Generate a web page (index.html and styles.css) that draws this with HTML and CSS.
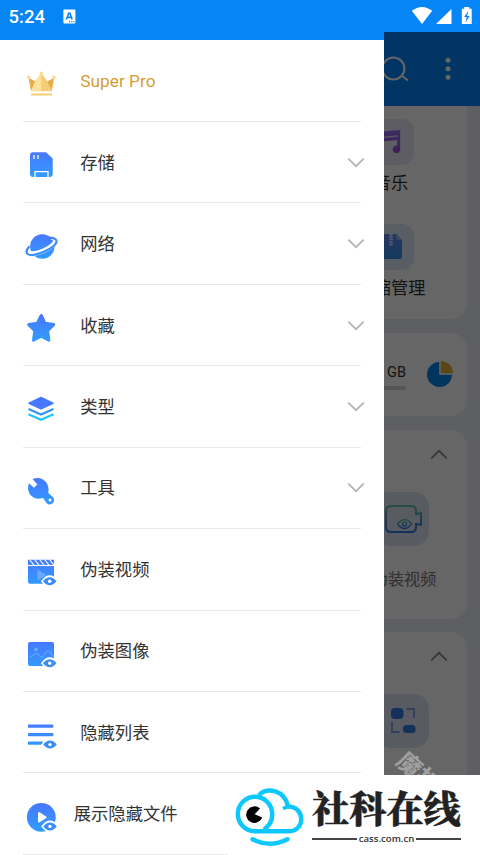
FILE: index.html
```html
<!DOCTYPE html>
<html lang="zh-CN">
<head>
<meta charset="utf-8">
<title>Super Pro</title>
<link rel="stylesheet" href="styles.css">
</head>
<body>
<svg class="defs" width="0" height="0">
  <defs>
    <linearGradient id="blue" gradientUnits="userSpaceOnUse" x1="0" y1="5" x2="0" y2="31"><stop offset="0" stop-color="#4778ff"/><stop offset="1" stop-color="#319cff"/></linearGradient>
    <linearGradient id="violet" x1="0" y1="0" x2="0" y2="1"><stop offset="0" stop-color="#9370f0"/><stop offset="1" stop-color="#a845d8"/></linearGradient>
    <linearGradient id="zip" x1="0" y1="0" x2="0" y2="1"><stop offset="0" stop-color="#6484ec"/><stop offset="1" stop-color="#2f92e8"/></linearGradient>
    <linearGradient id="camera" x1="0" y1="0" x2="0" y2="1"><stop offset="0" stop-color="#5fc0a8"/><stop offset="1" stop-color="#3478dc"/></linearGradient>
    <g id="eye">
      <path d="M-7.5 0Q-4-5 0-5T7.5 0Q4 5 0 5T-7.5 0Z" fill="#fff" stroke="#fff" stroke-width="2"/>
      <path d="M-6.8 0Q-3.5-4 0-4T6.8 0Q3.5 4 0 4T-6.8 0Z" fill="#3b8cff"/>
      <circle r="1.7" fill="#fff"/>
    </g>
    <symbol id="down" viewBox="0 0 18 12"><path d="M1.3 1.7 9 9.2l7.7-7.5" fill="none" stroke="#b3b3b3" stroke-width="1.7"/></symbol>
  </defs>
</svg>
<div class="screen">
  <header class="status">
    <span class="time">5:24</span>
    <svg class="ime" width="13" height="15" viewBox="0 0 13 15"><rect x=".4" y=".5" width="12" height="14" rx="1" fill="#fff"/><path d="M3.4 10.5 5.8 4h1l2.4 6.5M4.3 8.4h4" fill="none" stroke="#0685f7" stroke-width="1.6"/><path d="M6 12.7h1.1m1.1 0h1.1m1.1 0h1.1" stroke="#0685f7" stroke-width="1.2"/></svg>
    <svg class="signals" width="62" height="20" viewBox="0 0 62 20"><path d="M.8 4.8Q11-3 21.2 4.8L11 18Z" fill="#fff"/><path d="M40.5 3v15H25Z" fill="#fff"/><path d="M53.3 1h5v1.8h2.4V18H50.8V2.8h2.5Z" fill="#fff"/><path d="m57.2 5-4 6h2.4l-1 5.2 4-6.3h-2.5Z" fill="#0685f7"/></svg>
  </header>
  <main class="app">
    <div class="toolbar">
      <svg width="28" height="28" viewBox="0 0 28 28" fill="none" stroke="#fff" stroke-width="2"><circle cx="12.4" cy="13.5" r="11"/><path d="m20.5 20.5 6.5 5"/></svg>
      <svg width="6" height="24" viewBox="0 0 6 24" fill="#fff"><circle cx="3" cy="3.2" r="2.5"/><circle cx="3" cy="11.8" r="2.5"/><circle cx="3" cy="20.2" r="2.5"/></svg>
    </div>
    <section class="card shortcuts">
      <div class="shortcut">
        <div class="tile lilac"><svg width="46" height="46" viewBox="0 0 46 46"><path d="M14 12.500 32.200 11v19a3.800 3.800 0 1 1-3-3.400V21L16 22.300v10a4 4 0 1 1-2-3Z" fill="url(#violet)"/><path d="m15 18.300 15-1.500" stroke="#e5e2f7" stroke-width="1.300"/></svg></div>
        <span>音乐</span>
      </div>
      <div class="shortcut">
        <div class="tile sky"><svg width="46" height="46" viewBox="0 0 46 46"><path d="M13 10h15l6 6v17q0 2-2 2H13Z" fill="url(#zip)"/><path d="M28 10v4q0 2 2 2h4Z" fill="#92b4e8"/><path d="M23 10v12" stroke="#dce8ff" stroke-width="3.500" stroke-dasharray="1.500 .8"/></svg></div>
        <span>压缩管理</span>
      </div>
    </section>
    <section class="card usage">
      <div class="quota"><span>128 GB</span><div class="meter"></div></div>
      <svg width="28" height="28" viewBox="0 0 28 28"><path d="M13.200 2A12.500 12.500 0 1 0 26 14.700H13.200Z" fill="#0685e8"/><path d="M14.700 1v12.300H27A12.300 12.300 0 0 0 14.700 1Z" fill="#e1ac38"/></svg>
    </section>
    <section class="card group">
      <svg class="up" width="18" height="12"><use href="#down"/></svg>
      <div class="feature">
        <div class="tile big"><svg width="54" height="54" viewBox="0 0 54 54" fill="none" stroke="url(#camera)" stroke-width="2"><path d="M16 14h20q5 0 5 5v3h1l4-1v12l-4-1h-1v3q0 5-5 5H16q-5 0-5-5V19q0-5 5-5Z"/><path d="M22.500 32q7-9 14 0-7 9-14 0Z" stroke-width="1.400"/><circle cx="29.500" cy="32" r="2" stroke-width="1.400"/></svg></div>
        <span>伪装视频</span>
      </div>
    </section>
    <section class="card group last">
      <svg class="up" width="18" height="12"><use href="#down"/></svg>
      <div class="feature">
        <div class="tile big"><svg width="54" height="54" viewBox="0 0 54 54"><rect x="16" y="14" width="12.500" height="11" rx="4" fill="#3678de"/><rect x="28" y="31" width="12.500" height="8" rx="3.500" fill="#3678de"/><path d="M31.500 15h7.500v9M17 28v10h7.500" fill="none" stroke="#7d9ee0" stroke-width="1.900"/></svg></div>
      </div>
    </section>
    <div class="scrim"></div>
    <span class="stamp">魔扣</span>
  </main>
  <nav class="drawer">
    <div class="row pro">
      <svg class="icon" viewBox="0 0 36 36"><path d="M5.700 12 12 15.500 18.300 7l6.300 8.500L31 12l-2.200 13.200H7.900Z" fill="#f6cc74"/><path d="M5.700 12l6.800 3.500L8 24ZM31 12l-6.800 3.500L28.700 24Z" fill="#e6ad4d"/><path d="M18.300 7v18.200H8l4-9.700Z" fill="#ffe19f"/><g fill="#ffd98e"><circle cx="18.300" cy="7.200" r="1.700"/><circle cx="5.700" cy="11.200" r="1.700"/><circle cx="31" cy="11.200" r="1.700"/></g><path d="M8 28.500h21" stroke="#f6cc74" stroke-width="2"/></svg>
      <span class="label">Super Pro</span>
    </div>
    <div class="row">
      <svg class="icon" viewBox="0 0 36 36"><path d="M10 5.300h13l6.700 6.200V27q0 3-3 3H10q-3 0-3-3V8.300q0-3 3-3Z" fill="url(#blue)"/><path d="M11 8v4m4-4v4M12 30v-5.300h13V30" fill="none" stroke="#fff" stroke-width="1.300"/></svg>
      <span class="label">存储</span><svg class="chev" width="18" height="12"><use href="#down"/></svg>
    </div>
    <div class="row">
      <svg class="icon" viewBox="0 0 36 36"><circle cx="19.300" cy="17.500" r="12.200" fill="url(#blue)"/><g transform="rotate(-23 18.500 17.500)" fill="none"><path d="M6 13A15.500 5.800 0 1 0 31 13" stroke="#fff" stroke-width="4.800"/><path d="M7.500 12.500C-2 17 2 23.300 18.500 23.300S39 17 29.500 12.500" stroke="url(#blue)" stroke-width="2.200"/></g></svg>
      <span class="label">网络</span><svg class="chev" width="18" height="12"><use href="#down"/></svg>
    </div>
    <div class="row">
      <svg class="icon" viewBox="0 0 36 36"><path d="m18.200 5.500 3.900 7.800 8.600 1.300-6.100 6.200 1.300 9.400-7.700-4.100-7.700 4.100 1.300-9.400-6.100-6.200 8.600-1.300Z" fill="url(#blue)" stroke="url(#blue)" stroke-width="3" stroke-linejoin="round"/></svg>
      <span class="label">收藏</span><svg class="chev" width="18" height="12"><use href="#down"/></svg>
    </div>
    <div class="row">
      <svg class="icon" viewBox="0 0 36 36"><path d="m18 6.500 12 5.700-12 5.700-12-5.700Z" fill="#4778ff" stroke="#4778ff" stroke-width="1.500" stroke-linejoin="round"/><path d="m5.500 18 12.500 5.500L30.500 18" fill="none" stroke="#3794ff" stroke-width="2.200"/><path d="M5.500 23.200 18 28.700l12.500-5.500" fill="none" stroke="#1fc3ff" stroke-width="2.200"/></svg>
      <span class="label">类型</span><svg class="chev" width="18" height="12"><use href="#down"/></svg>
    </div>
    <div class="row">
      <svg class="icon" viewBox="0 0 36 36"><path d="M9.500 6Q17 3.300 22.500 8.500 26.500 13 25.300 20l4.500 4a4.300 4.300 0 0 1-6 6.200L20 25Q12 27.500 7 21.500 3.700 16 6 10.300l5 4.500L14.300 11.500Z" fill="url(#blue)"/><circle cx="27" cy="27" r="1.500" fill="#fff"/></svg>
      <span class="label">工具</span><svg class="chev" width="18" height="12"><use href="#down"/></svg>
    </div>
    <div class="row">
      <svg class="icon" viewBox="0 0 36 36"><path d="M5 5.800h26v24H7q-2 0-2-2Z" fill="url(#blue)"/><path d="M5 11.500h26" stroke="#fff" stroke-width="1.100"/><path d="m6.500 5.500 4.500 5.700m.5-5.700 4.500 5.700m.5-5.700 4.500 5.700m.5-5.700 4.500 5.700m.5-5.700 4.500 5.700" stroke="#fff" stroke-width="1.100"/><path d="M14.500 15.500v11l9-5.500Z" fill="#65aaff"/><use href="#eye" x="26.700" y="27.200"/></svg>
      <span class="label">伪装视频</span>
    </div>
    <div class="row">
      <svg class="icon" viewBox="0 0 36 36"><rect x="5" y="6" width="26" height="24" rx="2" fill="url(#blue)"/><circle cx="13" cy="13.500" r="1.800" fill="#75a9ff"/><path d="M7 21q3-1 5-3t4 1q3 4 5 0 4-8 8 0l2 2" fill="none" stroke="#64a3ff" stroke-width="1.100"/><use href="#eye" x="26.700" y="27.300"/></svg>
      <span class="label">伪装图像</span>
    </div>
    <div class="row">
      <svg class="icon" viewBox="0 0 36 36"><g fill="url(#blue)"><rect x="5" y="7.500" width="25.300" height="3.200" rx=".5"/><rect x="5" y="16" width="25.300" height="3.200" rx=".5"/><rect x="5" y="24.500" width="15" height="3.200" rx=".5"/></g><use href="#eye" x="27" y="27.600"/></svg>
      <span class="label">隐藏列表</span>
    </div>
    <div class="row hidden-files">
      <svg class="icon" viewBox="0 0 36 36"><circle cx="18.300" cy="18.300" r="14.400" fill="url(#blue)"/><path d="M16 14v8.500l6.500-4.200Z" fill="#fff" stroke="#fff" stroke-width="2" stroke-linejoin="round"/><use href="#eye" x="27" y="27.400"/></svg>
      <span class="label">展示隐藏文件</span>
    </div>
  </nav>
  <aside class="brand">
    <svg width="72" height="62" viewBox="0 0 72 62" fill="none" stroke="#0cc8ff" stroke-width="4.400"><path d="M30 43.500Q39 37 38.200 27A17.200 17.200 0 1 0 20.700 45.200H55C71.500 45.200 71.500 20.500 54 20.500 50.500 3.500 33 1 24.800 9.200"/><path d="m54 20.500-5 2.200" stroke-width="3.600"/><path d="M18.500 53.300q17.500 9 35 0" stroke-linecap="round"/><path d="M20.700 28.300 28.300 31.500A8.300 8.300 0 1 1 26 22.400Z" fill="#000" stroke="none"/></svg>
    <div class="brand-text">
      <strong>社科在线</strong>
      <div class="domain"><span>cass.com.cn</span></div>
    </div>
  </aside>
</div>
</body>
</html>
```
FILE: styles.css
```css
* { box-sizing: border-box; }
body { margin: 0; font-family: Roboto, "Noto Sans CJK SC", sans-serif; }
.defs { position: absolute; }
.screen { position: relative; width: 480px; height: 855px; overflow: hidden; display: flex; flex-direction: column; background: #0685f7; }
svg { display: block; flex: none; }

.status { height: 32px; flex: none; display: flex; align-items: center; padding: 0 7.500px 0 8.500px; position: relative; z-index: 3; }
.time { color: #fff; font-size: 18.500px; font-weight: 500; line-height: 32px; width: 54px; padding-top: 2px; }
.ime { margin-top: 1px; }
.signals { margin-left: auto; margin-top: -1px; }

.app { position: relative; flex: 1; background: #e8edf5; overflow: hidden; }
.toolbar { height: 73.500px; background: #0685f7; display: flex; align-items: center; justify-content: flex-end; gap: 36px; padding-right: 29px; }
.card { background: #fff; border-radius: 16px; margin: 0 13.500px 13.500px; overflow: hidden; }
.shortcuts { height: 213.500px; border-radius: 0 0 16px 16px; padding: 13.500px 22px 0 0; display: flex; flex-direction: column; align-items: flex-end; gap: 32px; }
.shortcut { width: 107px; height: 73px; display: flex; flex-direction: column; align-items: center; gap: 6px; font-size: 17.200px; line-height: 24px; color: #333; }
.tile { width: 46px; height: 46px; border-radius: 12px; flex: none; }
.lilac { background: #ebe8f7; }
.sky { background: #dfe9fa; }
.usage { height: 83.500px; display: flex; align-items: center; justify-content: flex-end; gap: 20px; padding-right: 12.500px; }
.quota { width: 280px; text-align: right; font-size: 14.500px; line-height: 18px; color: #333; padding-top: 6px; }
.meter { height: 4px; border-radius: 2px; background: #d4d4d4; margin-top: 4px; }
.group { height: 189px; padding: 18px 19px 0 0; display: flex; flex-direction: column; align-items: flex-end; }
.up { transform: rotate(180deg); filter: brightness(.75); }
.feature { width: 92px; margin-top: 32px; display: flex; flex-direction: column; align-items: center; font-size: 16.200px; line-height: 24px; color: #777; white-space: nowrap; }
.feature span { padding-left: 5px; }
.big { width: 54px; height: 54px; border-radius: 15px; background: #dce4f6; margin-bottom: 22px; }
.scrim { position: absolute; inset: 0; background: rgba(0, 0, 0, .6); }
.stamp { position: absolute; left: 394px; top: 727px; font-size: 24px; line-height: 28px; font-weight: 700; color: #a0a0a0; transform: rotate(42deg); white-space: nowrap; }

.drawer { position: absolute; left: 0; top: 32px; width: 384px; height: 823px; background: #fff; border-top: 8px solid #0685f7; padding-top: .5px; z-index: 2; }
.row { height: 81.450px; display: flex; align-items: center; margin: 0 23px; border-bottom: 1.500px solid #e9e9e9; }
.icon { width: 36px; height: 36px; margin-top: 6px; }
.label { margin-left: 21.300px; margin-top: 1px; font-size: 17.300px; line-height: 26px; color: #333; white-space: nowrap; }
.pro .label { color: #d69d36; }
.chev { margin-left: auto; margin-right: -4px; margin-top: 1px; }
.hidden-files .label { margin-left: 14.800px; }

.brand { position: absolute; left: 228px; top: 775px; width: 252px; height: 80px; z-index: 4; background: #fff; display: flex; padding: 11px 0 0 6px; }
.brand-text { width: 149px; margin-left: 6px; display: flex; flex-direction: column; }
.brand-text strong { font-family: "Noto Serif CJK SC", "Noto Sans CJK SC", serif; font-weight: 900; font-size: 37.200px; line-height: 42px; height: 47px; color: #222; -webkit-text-stroke: .5px #222; white-space: nowrap; }
.domain { display: flex; align-items: center; gap: 2px; font: 600 9.600px/12px "Open Sans", sans-serif; color: #333; }
.domain::before, .domain::after { content: ""; flex: 1; height: 2px; background: #444; }
```
